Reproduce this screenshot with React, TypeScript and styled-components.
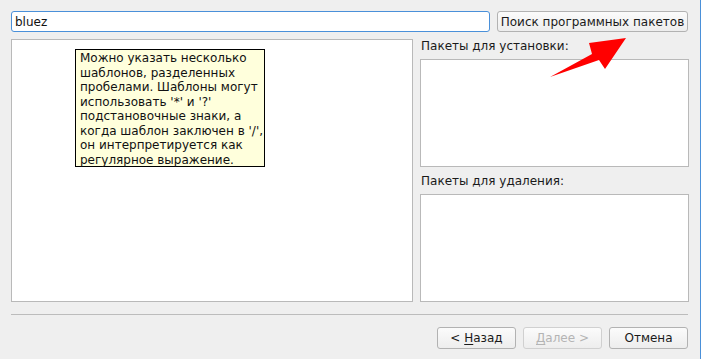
import React from "react";
import styled, { createGlobalStyle } from "styled-components";

const Global = createGlobalStyle`
  html, body { margin: 0; padding: 0; background: #efefef; }
  body { font-family: "DejaVu Sans", "Noto Sans", sans-serif; font-size: 12px; color: #1a1a1a; }
  * { box-sizing: border-box; }
`;

const Window = styled.div`
  position: relative;
  width: 701px;
  height: 359px;
  background: #efefef;
  border-right: 1px solid #4a90d9;
  padding: 11px 11px 0 11px;
  display: flex;
  flex-direction: column;
`;

const TopRow = styled.div`
  display: flex;
  gap: 7px;
  height: 21px;
  margin-right: 1px;
`;

const SearchInput = styled.div`
  flex: 1;
  height: 21px;
  background: #fff;
  border: 1px solid #4a90d9;
  border-radius: 3px;
  padding: 0 3px;
  display: flex;
  align-items: center;
  font-size: 12px;
  color: #111;
`;

const Button = styled.button<{ $w: number; $h: number; $disabled?: boolean }>`
  width: ${(p) => p.$w}px;
  height: ${(p) => p.$h}px;
  padding: 0;
  font-family: "DejaVu Sans", "Noto Sans", sans-serif;
  font-size: 12px;
  color: ${(p) => (p.$disabled ? "#b4b4b4" : "#1a1a1a")};
  background: linear-gradient(#fbfbfb, #ededed);
  border: 1px solid ${(p) => (p.$disabled ? "#d0d0d0" : "#b2b2b2")};
  border-radius: 3px;
  display: flex;
  align-items: center;
  justify-content: center;
  white-space: nowrap;
  u { text-decoration-thickness: 1px; text-underline-offset: 2px; }
`;

const Body = styled.div`
  display: flex;
  gap: 7px;
  margin-top: 7px;
  height: 263px;
`;

const ResultList = styled.div`
  position: relative;
  width: 402px;
  height: 263px;
  background: #fff;
  border: 1px solid #b9b9b9;
`;

const Tooltip = styled.div`
  position: absolute;
  left: 63px;
  top: 9px;
  width: 190px;
  height: 118px;
  background: #ffffdc;
  border: 1px solid #000;
  padding: 1px 4px;
  line-height: 14.5px;
  font-size: 12px;
  color: #111;
  white-space: nowrap;
`;

const Side = styled.div`
  width: 269px;
  display: flex;
  flex-direction: column;
`;

const Label = styled.div<{ $top?: number }>`
  margin-top: ${(p) => p.$top ?? 0}px;
  line-height: 15px;
  margin-bottom: 5px;
  padding-left: 1px;
  color: #1a1a1a;
`;

const PackageBox = styled.div`
  height: 108px;
  background: #fff;
  border: 1px solid #b9b9b9;
`;

const Separator = styled.div`
  margin-top: 12px;
  height: 1px;
  width: 677px;
  background: #bcbcbc;
`;

const Footer = styled.div`
  margin-top: 12px;
  display: flex;
  justify-content: flex-end;
  gap: 7px;
  padding-right: 1px;
`;

const Arrow = styled.svg`
  position: absolute;
  left: 0;
  top: 0;
  pointer-events: none;
`;

const tipLines = [
  "Можно указать несколько",
  "шаблонов, разделенных",
  "пробелами. Шаблоны могут",
  "использовать '*' и '?'",
  "подстановочные знаки, а",
  "когда шаблон заключен в '/',",
  "он интерпретируется как",
  "регулярное выражение.",
];

export default function App() {
  return (
    <>
      <Global />
      <Window>
        <TopRow>
          <SearchInput>bluez</SearchInput>
          <Button $w={191} $h={21}>Поиск программных пакетов</Button>
        </TopRow>
        <Body>
          <ResultList>
            <Tooltip>
              {tipLines.map((l, i) => (
                <div key={i}>{l}</div>
              ))}
            </Tooltip>
          </ResultList>
          <Side>
            <Label>Пакеты для установки:</Label>
            <PackageBox />
            <Label $top={7}>Пакеты для удаления:</Label>
            <PackageBox />
          </Side>
        </Body>
        <Separator />
        <Footer>
          <Button $w={79} $h={22}>
            &lt;&nbsp;<u>Н</u>азад
          </Button>
          <Button $w={79} $h={22} $disabled>
            <u>Д</u>алее &gt;
          </Button>
          <Button $w={79} $h={22}>Отмена</Button>
        </Footer>
        <Arrow width="701" height="359" viewBox="0 0 701 359">
          <polygon
            points="550,77 592,54 589,43 626,38 605,69 599,60"
            fill="#ff0000"
          />
        </Arrow>
      </Window>
    </>
  );
}
